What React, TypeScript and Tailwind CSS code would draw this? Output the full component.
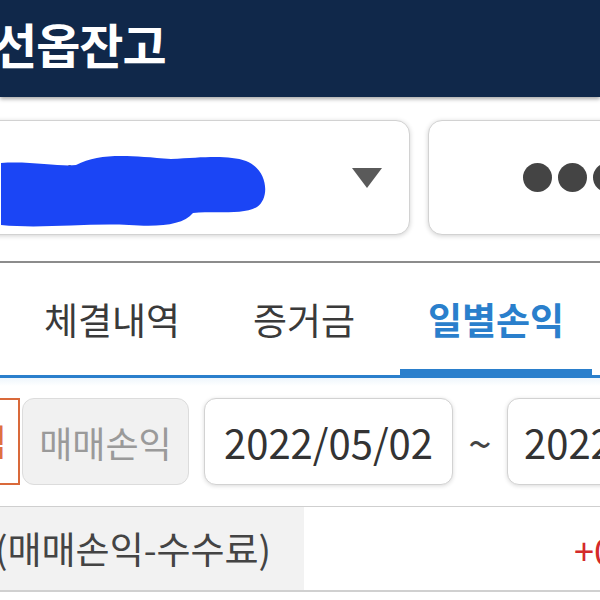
export default function App() {
  const font = { fontFamily: '"Noto Sans CJK KR", "Noto Sans", sans-serif' };

  return (
    <div
      className="w-[600px] h-[600px] overflow-hidden bg-white flex flex-col"
      style={font}
    >
      {/* header */}
      <div className="relative z-10 h-[97px] shrink-0 bg-[#10284a] shadow-[0_2px_4px_rgba(0,0,0,0.35)] flex items-center">
        <h1 className="-ml-[7px] -mt-[12px] text-[48px] leading-[56px] font-bold text-white tracking-[-1px]">
          선옵잔고
        </h1>
      </div>

      {/* account select row */}
      <div className="flex gap-[18px] pt-[23px] pb-[26px] shrink-0">
        <div className="relative -ml-[20px] w-[430px] h-[115px] shrink-0 rounded-[14px] border border-[#d2d2d2] bg-white shadow-[0_1px_5px_rgba(0,0,0,0.18)] flex items-center justify-end pr-[26px]">
          <span className="absolute left-[40px] top-[34px] text-[30px] text-[#444]">
            계좌
          </span>
          {/* redaction scribble */}
          <svg
            className="absolute left-[20px] top-[34px]"
            width="268"
            height="76"
            viewBox="0 0 268 76"
          >
            <path
              d="M0 8 C30 6 60 12 75 10 C98 -2 125 0 170 4 C205 2 228 0 245 6 C266 14 270 42 256 52 C244 60 215 56 192 58 C182 70 160 72 128 70 C85 68 40 74 0 70 Z"
              fill="#1b45f5"
            />
          </svg>
          <svg width="32" height="22" viewBox="0 0 32 22">
            <path d="M1 1 H31 L16 21 Z" fill="#5a5a5a" />
          </svg>
        </div>
        <div className="w-[200px] h-[115px] shrink-0 rounded-[14px] border border-[#d2d2d2] bg-white shadow-[0_1px_5px_rgba(0,0,0,0.18)] flex items-center gap-[6px] pl-[94px]">
          <span className="w-[29px] h-[29px] rounded-full bg-[#444] shrink-0" />
          <span className="w-[29px] h-[29px] rounded-full bg-[#444] shrink-0" />
          <span className="w-[29px] h-[29px] rounded-full bg-[#444] shrink-0" />
        </div>
      </div>

      {/* tabs */}
      <div className="flex items-end shrink-0 border-t-2 border-[#8c8c8c] border-b-[3px] border-b-[#2a7fcc] pl-[16px]">
        <div className="w-[192px] h-[112px] shrink-0 pt-[36px] text-center text-[37px] leading-[40px] text-[#3a3a3a]">
          체결내역
        </div>
        <div className="w-[192px] h-[112px] shrink-0 pt-[36px] text-center text-[37px] leading-[40px] text-[#3a3a3a]">
          증거금
        </div>
        <div className="w-[192px] h-[112px] shrink-0 pt-[36px] text-center text-[37px] leading-[40px] font-bold text-[#2a7fcc] border-b-[6px] border-[#2a7fcc]">
          일별손익
        </div>
        <div className="w-[192px] h-[112px] shrink-0 pt-[36px] text-center text-[37px] leading-[40px] text-[#3a3a3a]">
          미결제
        </div>
      </div>

      {/* filter row */}
      <div className="flex items-center pt-[20px] shrink-0 bg-gradient-to-b from-[#eef6fc] to-white to-[8px]">
        <div className="-ml-[60px] w-[80px] h-[87px] shrink-0 border-2 border-[#d9693a] bg-white overflow-hidden relative">
          <span className="absolute left-[32px] top-[18px] text-[36px] leading-[44px] text-[#e07040]">
            익
          </span>
        </div>
        <div className="ml-[2px] w-[167px] h-[87px] shrink-0 rounded-[12px] border border-[#dcdcdc] bg-[#f1f1f1] flex items-center justify-center text-[36px] text-[#9a9a9a]">
          매매손익
        </div>
        <div className="ml-[15px] w-[249px] h-[87px] shrink-0 rounded-[12px] border border-[#d2d2d2] bg-white shadow-[0_1px_4px_rgba(0,0,0,0.15)] flex items-center justify-center text-[40px] text-[#333]">
          2022/05/02
        </div>
        <div className="w-[54px] shrink-0 text-center text-[42px] leading-[50px] text-[#444]">~</div>
        <div className="w-[249px] h-[87px] shrink-0 rounded-[12px] border border-[#d2d2d2] bg-white shadow-[0_1px_4px_rgba(0,0,0,0.15)] flex items-center pl-[16px] text-[40px] text-[#333]">
          2022/05/06
        </div>
      </div>

      {/* summary row */}
      <div className="mt-[21px] flex h-[86px] shrink-0 border-t border-[#cfcfcf] border-b-2 border-b-[#d0d0d0]">
        <div className="w-[304px] shrink-0 bg-[#f2f2f2] flex items-center -indent-[5px] text-[37px] text-[#444] whitespace-nowrap">
          (매매손익-수수료)
        </div>
        <div className="flex-1 flex items-center pl-[270px] text-[36px] text-[#d42a2a] whitespace-nowrap">
          +0
        </div>
      </div>
    </div>
  );
}
